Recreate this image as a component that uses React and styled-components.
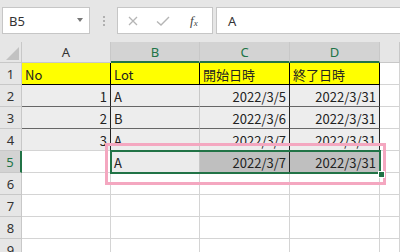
import React from "react";
import styled, { createGlobalStyle } from "styled-components";

const GlobalStyle = createGlobalStyle`
  html, body {
    margin: 0;
    padding: 0;
    background: #ffffff;
    overflow: hidden;
  }
  * {
    box-sizing: border-box;
  }
`;

const Page = styled.div`
  width: 400px;
  height: 252px;
  overflow: hidden;
  font-family: "Noto Sans CJK JP", "Noto Sans", sans-serif;
  color: #222;
`;

const TopBar = styled.div`
  height: 42px;
  background: #e6e6e6;
  display: flex;
  align-items: flex-start;
  padding: 7px 0 0 2px;
`;

const NameBox = styled.div`
  width: 88px;
  height: 27px;
  background: #fff;
  border: 1px solid #c6c6c6;
  display: flex;
  align-items: center;
  justify-content: space-between;
  padding: 0 6px 0 6px;
  font-family: "Noto Sans", sans-serif;
  font-size: 13px;
  color: #333;
`;

const Caret = styled.span`
  width: 0;
  height: 0;
  border-left: 3.5px solid transparent;
  border-right: 3.5px solid transparent;
  border-top: 4px solid #777;
  margin-top: -2px;
`;

const Grip = styled.div`
  width: 27px;
  height: 27px;
  display: flex;
  flex-direction: column;
  align-items: center;
  justify-content: center;
  gap: 2px;
  span {
    width: 2px;
    height: 2px;
    background: #b0b0b0;
  }
`;

const FuncBox = styled.div`
  width: 96px;
  height: 27px;
  background: #fff;
  border: 1px solid #c6c6c6;
  display: flex;
  align-items: center;
  padding-left: 9px;
  color: #b5b5b5;
`;

const FuncIcon = styled.svg`
  margin-right: ${(p) => p.$gap}px;
  flex-shrink: 0;
`;

const Fx = styled.span`
  font-family: "Liberation Serif", serif;
  font-style: italic;
  font-size: 13px;
  color: #444;
  sub {
    font-size: 9px;
    vertical-align: -1px;
  }
`;

const FormulaBox = styled.div`
  flex: 1;
  height: 27px;
  margin-left: 3px;
  background: #fff;
  border: 1px solid #c6c6c6;
  border-right: none;
  display: flex;
  align-items: center;
  padding-left: 11px;
  font-family: "Noto Sans", sans-serif;
  font-size: 13px;
  color: #333;
`;

const Sheet = styled.div`
  position: relative;
  display: grid;
  grid-template-columns: 22px 89px 89px 90px 90px 1fr;
  grid-template-rows: 21px repeat(9, 22px);
`;

const Corner = styled.div`
  position: relative;
  background: #e6e6e6;
  border-right: 1px solid #c8c8c8;
  border-bottom: 1px solid #c8c8c8;
  &::after {
    content: "";
    position: absolute;
    right: 2px;
    bottom: 2px;
    border-left: 13px solid transparent;
    border-bottom: 13px solid #c2c2c2;
  }
`;

const ColHead = styled.div`
  background: ${(p) => (p.$active ? "#d3d3d3" : "#e6e6e6")};
  color: ${(p) => (p.$active ? "#217346" : "#333")};
  border-right: 1px solid #c8c8c8;
  border-bottom: ${(p) => (p.$active ? "2px solid #217346" : "1px solid #c8c8c8")};
  display: flex;
  align-items: center;
  justify-content: center;
  font-family: "Noto Sans", sans-serif;
  font-size: 13px;
`;

const RowHead = styled.div`
  background: ${(p) => (p.$active ? "#d3d3d3" : "#e6e6e6")};
  color: ${(p) => (p.$active ? "#217346" : "#333")};
  border-right: ${(p) => (p.$active ? "2px solid #217346" : "1px solid #c8c8c8")};
  border-bottom: 1px solid #c8c8c8;
  display: flex;
  align-items: center;
  justify-content: center;
  padding-top: 1px;
  font-family: "Noto Sans", sans-serif;
  font-size: 13px;
`;

const Cell = styled.div`
  background: ${(p) => p.$bg || "#fff"};
  border-right: 1px solid ${(p) => p.$vline || "#d4d4d4"};
  border-bottom: 1px solid ${(p) => p.$hline || "#d4d4d4"};
  display: flex;
  align-items: center;
  justify-content: ${(p) => (p.$right ? "flex-end" : "flex-start")};
  padding: 2px 3px 0 3px;
  font-size: 13px;
  white-space: nowrap;
  overflow: hidden;
`;

const Selection = styled.div`
  position: absolute;
  left: 110px;
  top: 108px;
  width: 271px;
  height: 24px;
  border: 2px solid #217346;
  pointer-events: none;
`;

const Handle = styled.div`
  position: absolute;
  right: -6px;
  bottom: -6px;
  width: 7px;
  height: 7px;
  background: #217346;
  border: 1px solid #fff;
`;

const Highlight = styled.div`
  position: absolute;
  left: 105px;
  top: 101px;
  width: 281px;
  height: 42px;
  border: 3px solid #f4a7c0;
  pointer-events: none;
`;

const YELLOW = "#ffff00";
const FILL = "#ededed";
const SEL = "#bfbfbf";

const rows = [
  {
    n: 1,
    cells: [
      { t: "No", bg: YELLOW, v: "#000", h: "#000" },
      { t: "Lot", bg: YELLOW, v: "#000", h: "#000" },
      { t: "開始日時", bg: YELLOW, v: "#000", h: "#000" },
      { t: "終了日時", bg: YELLOW, v: "#000", h: "#000" },
    ],
  },
  {
    n: 2,
    cells: [
      { t: "1", r: true, bg: FILL, v: "#222", h: "#666" },
      { t: "A", bg: FILL, v: "#c8c8c8", h: "#666" },
      { t: "2022/3/5", r: true, bg: FILL, v: "#222", h: "#666" },
      { t: "2022/3/31", r: true, bg: FILL, v: "#222", h: "#666" },
    ],
  },
  {
    n: 3,
    cells: [
      { t: "2", r: true, bg: FILL, v: "#222", h: "#666" },
      { t: "B", bg: FILL, v: "#c8c8c8", h: "#666" },
      { t: "2022/3/6", r: true, bg: FILL, v: "#222", h: "#666" },
      { t: "2022/3/31", r: true, bg: FILL, v: "#222", h: "#666" },
    ],
  },
  {
    n: 4,
    cells: [
      { t: "3", r: true, bg: FILL, v: "#222", h: "#d4d4d4" },
      { t: "A", bg: FILL, v: "#c8c8c8", h: "#d4d4d4" },
      { t: "2022/3/7", r: true, bg: FILL, v: "#222", h: "#d4d4d4" },
      { t: "2022/3/31", r: true, bg: FILL, v: "#222", h: "#d4d4d4" },
    ],
  },
  {
    n: 5,
    active: true,
    cells: [
      { t: "" },
      { t: "A", bg: "#ebebeb", v: "#c8c8c8" },
      { t: "2022/3/7", r: true, bg: SEL, v: "#222" },
      { t: "2022/3/31", r: true, bg: SEL, v: "#222" },
    ],
  },
  { n: 6, cells: [{}, {}, {}, {}] },
  { n: 7, cells: [{}, {}, {}, {}] },
  { n: 8, cells: [{}, {}, {}, {}] },
  { n: 9, cells: [{}, {}, {}, {}] },
];

const columns = ["A", "B", "C", "D", ""];

export default function App() {
  return (
    <Page>
      <GlobalStyle />
      <TopBar>
        <NameBox>
          B5
          <Caret />
        </NameBox>
        <Grip>
          <span />
          <span />
          <span />
        </Grip>
        <FuncBox>
          <FuncIcon $gap={16} width="12" height="12" viewBox="0 0 12 12">
            <path d="M2 2 L10 10 M10 2 L2 10" stroke="#b5b5b5" strokeWidth="1.3" fill="none" />
          </FuncIcon>
          <FuncIcon $gap={19} width="16" height="12" viewBox="0 0 16 12">
            <path d="M2 6.5 L6 10 L14 2" stroke="#b5b5b5" strokeWidth="1.4" fill="none" />
          </FuncIcon>
          <Fx>
            f<sub>x</sub>
          </Fx>
        </FuncBox>
        <FormulaBox>A</FormulaBox>
      </TopBar>
      <Sheet>
        <Corner />
        {columns.map((c, i) => (
          <ColHead key={i} $active={i >= 1 && i <= 3}>
            {c}
          </ColHead>
        ))}
        {rows.map((row) => (
          <React.Fragment key={row.n}>
            <RowHead $active={row.active}>{row.n}</RowHead>
            {row.cells.map((c, i) => (
              <Cell key={i} $bg={c.bg} $right={c.r} $vline={c.v} $hline={c.h}>
                {c.t}
              </Cell>
            ))}
            <Cell />
          </React.Fragment>
        ))}
        <Highlight />
        <Selection>
          <Handle />
        </Selection>
      </Sheet>
    </Page>
  );
}
